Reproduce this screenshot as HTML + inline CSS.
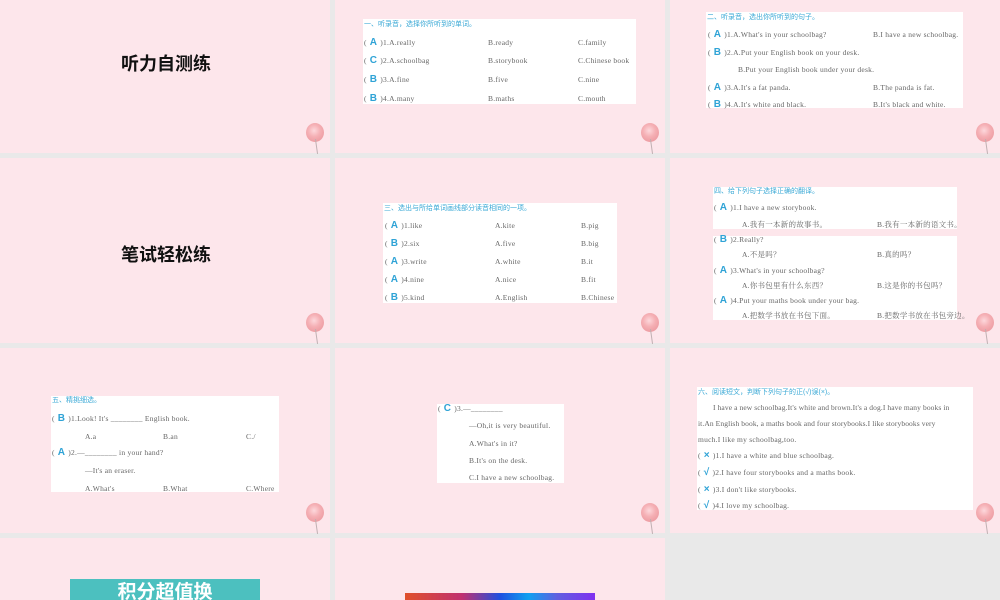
<!DOCTYPE html>
<html style="width:1000px;height:600px;overflow:hidden"><head><meta charset="utf-8"><style>
*{margin:0;padding:0;box-sizing:border-box}
body{width:1000px;height:600px;background:#e9e9e9;position:relative;overflow:hidden;font-family:"Liberation Serif","Noto Serif CJK SC",serif;color:#666}
.s{position:absolute;background:#fde6eb;overflow:hidden}
.p{position:absolute;background:#fff}
.l{position:absolute;font-size:7.5px;white-space:nowrap;line-height:10px;letter-spacing:0.25px}
.t{position:absolute;font-size:7px;color:#3ba9d6;font-family:"Liberation Sans","Noto Sans CJK SC",sans-serif;white-space:nowrap;line-height:10px}
.a{color:#2fa3d6;font-weight:bold;font-size:10px;font-family:"Liberation Sans",sans-serif;margin:0 3px}
.h{position:absolute;font-family:"Liberation Sans","Noto Sans CJK SC",sans-serif;font-weight:bold;font-size:18px;color:#111}
.b{position:absolute;width:18px;height:19px;border-radius:50%;background:radial-gradient(circle at 45% 40%,#fdd8dc 0,#f5b0b5 40%,#ec9aa0 80%,#ec9aa0 100%)}
.st{position:absolute;width:1px;height:15px;background:#c0b0b2;transform:rotate(-8deg)}
</style></head><body>
<div class="s" style="left:0;top:0;width:330px;height:153px"></div>
<div class="s" style="left:335px;top:0;width:330px;height:153px"></div>
<div class="s" style="left:670px;top:0;width:330px;height:153px"></div>
<div class="s" style="left:0;top:158px;width:330px;height:185px"></div>
<div class="s" style="left:335px;top:158px;width:330px;height:185px"></div>
<div class="s" style="left:670px;top:158px;width:330px;height:185px"></div>
<div class="s" style="left:0;top:348px;width:330px;height:185px"></div>
<div class="s" style="left:335px;top:348px;width:330px;height:185px"></div>
<div class="s" style="left:670px;top:348px;width:330px;height:185px"></div>
<div class="s" style="left:0;top:538px;width:330px;height:62px"></div>
<div class="s" style="left:335px;top:538px;width:330px;height:62px"></div>

<div class="b" style="left:306px;top:123px"></div><div class="st" style="left:316px;top:139px"></div>
<div class="b" style="left:641px;top:123px"></div><div class="st" style="left:651px;top:139px"></div>
<div class="b" style="left:976px;top:123px"></div><div class="st" style="left:986px;top:139px"></div>
<div class="b" style="left:306px;top:313px"></div><div class="st" style="left:316px;top:329px"></div>
<div class="b" style="left:641px;top:313px"></div><div class="st" style="left:651px;top:329px"></div>
<div class="b" style="left:976px;top:313px"></div><div class="st" style="left:986px;top:329px"></div>
<div class="b" style="left:306px;top:503px"></div><div class="st" style="left:316px;top:519px"></div>
<div class="b" style="left:641px;top:503px"></div><div class="st" style="left:651px;top:519px"></div>
<div class="b" style="left:976px;top:503px"></div><div class="st" style="left:986px;top:519px"></div>

<div class="h" style="left:121px;top:50px">听力自测练</div>
<div class="h" style="left:121px;top:241px">笔试轻松练</div>

<div class="p" style="left:363px;top:19px;width:273px;height:85px"></div>
<div class="t" style="left:364px;top:20px">一、听录音，选择你所听到的单词。</div>
<div class="l" style="left:364px;top:38px">(<span class="a">A</span>)1.A.really</div><div class="l" style="left:488px;top:38px">B.ready</div><div class="l" style="left:578px;top:38px">C.family</div>
<div class="l" style="left:364px;top:56px">(<span class="a">C</span>)2.A.schoolbag</div><div class="l" style="left:488px;top:56px">B.storybook</div><div class="l" style="left:578px;top:56px">C.Chinese book</div>
<div class="l" style="left:364px;top:75px">(<span class="a">B</span>)3.A.fine</div><div class="l" style="left:488px;top:75px">B.five</div><div class="l" style="left:578px;top:75px">C.nine</div>
<div class="l" style="left:364px;top:94px">(<span class="a">B</span>)4.A.many</div><div class="l" style="left:488px;top:94px">B.maths</div><div class="l" style="left:578px;top:94px">C.mouth</div>

<div class="p" style="left:706px;top:12px;width:257px;height:96px"></div>
<div class="t" style="left:707px;top:13px">二、听录音，选出你所听到的句子。</div>
<div class="l" style="left:708px;top:30px">(<span class="a">A</span>)1.A.What's in your schoolbag?</div><div class="l" style="left:873px;top:30px">B.I have a new schoolbag.</div>
<div class="l" style="left:708px;top:48px">(<span class="a">B</span>)2.A.Put your English book on your desk.</div>
<div class="l" style="left:738px;top:65px">B.Put your English book under your desk.</div>
<div class="l" style="left:708px;top:83px">(<span class="a">A</span>)3.A.It's a fat panda.</div><div class="l" style="left:873px;top:83px">B.The panda is fat.</div>
<div class="l" style="left:708px;top:100px">(<span class="a">B</span>)4.A.It's white and black.</div><div class="l" style="left:873px;top:100px">B.It's black and white.</div>

<div class="p" style="left:383px;top:203px;width:234px;height:100px"></div>
<div class="t" style="left:384px;top:204px">三、选出与所给单词画线部分读音相同的一项。</div>
<div class="l" style="left:385px;top:221px">(<span class="a">A</span>)1.like</div><div class="l" style="left:495px;top:221px">A.kite</div><div class="l" style="left:581px;top:221px">B.pig</div>
<div class="l" style="left:385px;top:239px">(<span class="a">B</span>)2.six</div><div class="l" style="left:495px;top:239px">A.five</div><div class="l" style="left:581px;top:239px">B.big</div>
<div class="l" style="left:385px;top:257px">(<span class="a">A</span>)3.write</div><div class="l" style="left:495px;top:257px">A.white</div><div class="l" style="left:581px;top:257px">B.it</div>
<div class="l" style="left:385px;top:275px">(<span class="a">A</span>)4.nine</div><div class="l" style="left:495px;top:275px">A.nice</div><div class="l" style="left:581px;top:275px">B.fit</div>
<div class="l" style="left:385px;top:293px">(<span class="a">B</span>)5.kind</div><div class="l" style="left:495px;top:293px">A.English</div><div class="l" style="left:581px;top:293px">B.Chinese</div>

<div class="p" style="left:713px;top:187px;width:244px;height:42px"></div>
<div class="p" style="left:713px;top:236px;width:244px;height:84px"></div>
<div class="t" style="left:714px;top:187px">四、给下列句子选择正确的翻译。</div>
<div class="l" style="left:714px;top:203px">(<span class="a">A</span>)1.I have a new storybook.</div>
<div class="l" style="left:742px;top:220px">A.我有一本新的故事书。</div><div class="l" style="left:877px;top:220px">B.我有一本新的语文书。</div>
<div class="l" style="left:714px;top:235px">(<span class="a">B</span>)2.Really?</div>
<div class="l" style="left:742px;top:250px">A.不是吗？</div><div class="l" style="left:877px;top:250px">B.真的吗？</div>
<div class="l" style="left:714px;top:266px">(<span class="a">A</span>)3.What's in your schoolbag?</div>
<div class="l" style="left:742px;top:281px">A.你书包里有什么东西？</div><div class="l" style="left:877px;top:281px">B.这是你的书包吗？</div>
<div class="l" style="left:714px;top:296px">(<span class="a">A</span>)4.Put your maths book under your bag.</div>
<div class="l" style="left:742px;top:311px">A.把数学书放在书包下面。</div><div class="l" style="left:877px;top:311px">B.把数学书放在书包旁边。</div>

<div class="p" style="left:51px;top:396px;width:228px;height:96px"></div>
<div class="t" style="left:52px;top:396px">五、精挑细选。</div>
<div class="l" style="left:52px;top:414px">(<span class="a">B</span>)1.Look! It's ________ English book.</div>
<div class="l" style="left:85px;top:432px">A.a</div><div class="l" style="left:163px;top:432px">B.an</div><div class="l" style="left:246px;top:432px">C./</div>
<div class="l" style="left:52px;top:448px">(<span class="a">A</span>)2.—________ in your hand?</div>
<div class="l" style="left:85px;top:466px">—It's an eraser.</div>
<div class="l" style="left:85px;top:484px">A.What's</div><div class="l" style="left:163px;top:484px">B.What</div><div class="l" style="left:246px;top:484px">C.Where</div>

<div class="p" style="left:437px;top:404px;width:127px;height:79px"></div>
<div class="l" style="left:438px;top:404px">(<span class="a">C</span>)3.—________</div>
<div class="l" style="left:469px;top:421px">—Oh,it is very beautiful.</div>
<div class="l" style="left:469px;top:439px">A.What's in it?</div>
<div class="l" style="left:469px;top:456px">B.It's on the desk.</div>
<div class="l" style="left:469px;top:473px">C.I have a new schoolbag.</div>

<div class="p" style="left:697px;top:387px;width:276px;height:123px"></div>
<div class="t" style="left:698px;top:388px">六、阅读短文，判断下列句子的正(√)误(×)。</div>
<div class="l" style="left:713px;top:403px;letter-spacing:0.1px">I have a new schoolbag.It's white and brown.It's a dog.I have many books in</div>
<div class="l" style="left:698px;top:419px;letter-spacing:0.1px">it.An English book, a maths book and four storybooks.I like storybooks very</div>
<div class="l" style="left:698px;top:435px">much.I like my schoolbag,too.</div>
<div class="l" style="left:698px;top:451px">(<span class="a">×</span>)1.I have a white and blue schoolbag.</div>
<div class="l" style="left:698px;top:468px">(<span class="a">√</span>)2.I have four storybooks and a maths book.</div>
<div class="l" style="left:698px;top:485px">(<span class="a">×</span>)3.I don't like storybooks.</div>
<div class="l" style="left:698px;top:501px">(<span class="a">√</span>)4.I love my schoolbag.</div>

<div style="position:absolute;left:70px;top:579px;width:190px;height:21px;overflow:hidden;background:#4cc0bf;color:#fff;font-family:'Liberation Sans','Noto Sans CJK SC',sans-serif;font-weight:bold;font-size:19px;text-align:center;line-height:28px">积分超值换</div>
<div style="position:absolute;left:405px;top:593px;width:190px;height:7px;background:linear-gradient(90deg,#e0502a,#c03070 30%,#2050e0 50%,#10a0f0 65%,#6060e0 80%,#8030f0)"></div>
</body></html>
